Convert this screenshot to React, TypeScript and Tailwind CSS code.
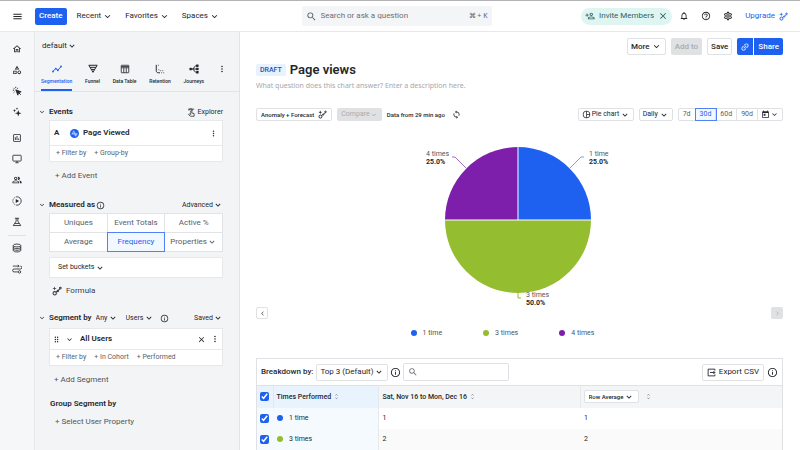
import { useState, type ReactNode } from 'react';
import clsx from 'clsx';
import {
  MdArrowBackIosNew,
  MdClose,
  MdDragIndicator,
  MdHelpOutline,
  MdInfoOutline,
  MdInsertLink,
  MdKeyboardArrowDown,
  MdMenu,
  MdMoreVert,
  MdNotificationsNone,
  MdOutlineCategory,
  MdOutlineHome,
  MdOutlineInsertChartOutlined,
  MdOutlinePeopleAlt,
  MdOutlinePersonAddAlt,
  MdOutlinePieChartOutline,
  MdOutlineSettings,
  MdSearch,
  MdSync,
  MdToday,
  MdUnfoldMore,
} from 'react-icons/md';

type IconProps = { size?: number; className?: string };

function Svg({ size = 10, className, children }: IconProps & { children: ReactNode }) {
  return (
    <svg
      width={size}
      height={size}
      viewBox="0 0 24 24"
      fill="none"
      stroke="currentColor"
      strokeWidth={2}
      className={clsx('shrink-0', className)}
      aria-hidden="true"
    >
      {children}
    </svg>
  );
}

function ClickIcon(props: IconProps) {
  return (
    <Svg {...props}>
      <path d="M9 9l13 5-6 2-2 6z" fill="currentColor" />
      <path d="M16 16l5 5M9 2v3M3.500 4.500l2 2M2 10h3M4 16l2-2M14.500 4.500l-1.500 2" strokeWidth={2.400} />
    </Svg>
  );
}

function SparklesIcon(props: IconProps) {
  return (
    <Svg {...props}>
      <g fill="currentColor" stroke="none">
        <path d="M15 7l2 6 6 2-6 2-2 6-2-6-6-2 6-2z" />
        <path d="M6 4l1 3.500L10.500 8.500 7 9.500 6 13 5 9.500 1.500 8.500 5 7.500z" />
        <path d="M12 1l.8 2.200L15 4l-2.200.8L12 7l-.8-2.200L9 4l2.200-.8z" />
      </g>
    </Svg>
  );
}

function MonitorIcon(props: IconProps) {
  return (
    <Svg {...props}>
      <rect x="2" y="3" width="20" height="14" rx="1.500" />
      <path d="M8 21h8M12 17v4" />
    </Svg>
  );
}

function PlayIcon(props: IconProps) {
  return (
    <Svg {...props}>
      <path d="M12 2a10 10 0 010 20" />
      <path d="M12 22a10 10 0 010-20" strokeDasharray="3 2.500" />
      <path d="M9 7v10l8-5z" fill="currentColor" stroke="none" />
    </Svg>
  );
}

function FlaskIcon(props: IconProps) {
  return (
    <Svg {...props}>
      <path d="M7 3h10M10 3v7L3 20.500h18L14 10V3M7 15.500h10" />
    </Svg>
  );
}

function DatabaseIcon(props: IconProps) {
  return (
    <Svg {...props}>
      <ellipse cx="12" cy="6" rx="9" ry="3.500" />
      <path d="M3 6v12c0 2 4 3.500 9 3.500s9-1.500 9-3.500V6M3 10c0 2 4 3.500 9 3.500s9-1.500 9-3.500M3 14c0 2 4 3.500 9 3.500s9-1.500 9-3.500" />
    </Svg>
  );
}

function RouteIcon(props: IconProps) {
  return (
    <Svg {...props}>
      <path d="M2 5h15M14 2l3 3-3 3M20 5a3.500 3.500 0 010 7H5a3.500 3.500 0 000 7h9" />
      <circle cx="18" cy="19" r="3" />
    </Svg>
  );
}

function LineIcon(props: IconProps) {
  return (
    <Svg {...props}>
      <path d="M2 18l7-7 5 4 8-9" strokeWidth={2.400} />
      <g fill="currentColor" stroke="none">
        <circle cx="2.500" cy="18" r="2.200" />
        <circle cx="9" cy="11" r="2.200" />
        <circle cx="14" cy="15" r="2.200" />
        <circle cx="21.500" cy="6" r="2.200" />
      </g>
    </Svg>
  );
}

function FunnelIcon(props: IconProps) {
  return (
    <Svg {...props}>
      <path d="M2 3h20L12 20zM5 8h14M8 13h8" strokeWidth={2.400} />
    </Svg>
  );
}

function TableIcon(props: IconProps) {
  return (
    <Svg {...props}>
      <rect x="3" y="3" width="18" height="18" rx="1" />
      <path d="M3 6h18M3 9h18M9 9v12M15 9v12" />
    </Svg>
  );
}

function RetentionIcon(props: IconProps) {
  return (
    <Svg {...props}>
      <path d="M3 2v14c0 3 2 5 5 5h4" strokeWidth={2.400} />
      <path d="M7 3h3M15 21h8M9 13c0 2 1 3 3 3h8" strokeDasharray="2 3" />
    </Svg>
  );
}

function JourneysIcon(props: IconProps) {
  return (
    <Svg {...props}>
      <path d="M4 12h16M9 12l7-8h4M9 12l7 8h4" strokeWidth={2.400} />
      <g fill="currentColor" stroke="none">
        <rect x="1" y="9" width="6" height="6" rx="2" />
        <rect x="17" y="1" width="6" height="6" rx="1" />
        <rect x="17" y="9" width="6" height="6" rx="1" />
        <rect x="17" y="17" width="6" height="6" rx="1" />
      </g>
    </Svg>
  );
}

function InsightIcon(props: IconProps) {
  return (
    <Svg {...props}>
      <circle cx="6.500" cy="17.500" r="4" strokeWidth={2.600} />
      <circle cx="14" cy="12" r="1.600" strokeWidth={2.600} />
      <circle cx="20" cy="5" r="2" strokeWidth={2.600} />
      <path d="M9.500 15l3-2M15.500 10.500l3-3.500" strokeWidth={2.600} />
      <path d="M6 1l1.300 3.700L11 6 7.300 7.300 6 11 4.700 7.300 1 6l3.700-1.300z" fill="currentColor" stroke="none" />
    </Svg>
  );
}

function TapIcon(props: IconProps) {
  return (
    <Svg {...props}>
      <path d="M3 3h16M5 7a5 5 0 0110 0M10 17V8a1.500 1.500 0 013 0v5l6 2v7H9l-5-5 2-1z" />
    </Svg>
  );
}

function ExportIcon(props: IconProps) {
  return (
    <Svg {...props}>
      <path d="M21 7V3H3v18h18v-4M8 12h13M17 8l4 4-4 4" strokeWidth={2.400} />
    </Svg>
  );
}

function EventBadge() {
  return (
    <svg width="9" height="9" viewBox="0 0 24 24" className="shrink-0" aria-hidden="true">
      <circle cx="12" cy="12" r="12" fill="#1e61f0" />
      <path d="M4 13h16M7 13c2-10 4-10 6 0s3 6 4 0" fill="none" stroke="#fff" strokeWidth="1.800" />
    </svg>
  );
}

function Picker({ label, value, className }: { label: string; value: string; className?: string }) {
  return (
    <label className={clsx('inline-flex items-center', className)}>
      <select aria-label={label} className="appearance-none bg-transparent outline-none">
        <option>{value}</option>
      </select>
      <MdKeyboardArrowDown size={10} className="shrink-0" />
    </label>
  );
}

const railTop = [
  { name: 'Home', Icon: MdOutlineHome },
  { name: 'Catalog', Icon: MdOutlineCategory },
  { name: 'Autocapture', Icon: ClickIcon },
  { name: 'Assistant', Icon: SparklesIcon },
];

const railMiddle = [
  { name: 'Analytics', Icon: MdOutlineInsertChartOutlined },
  { name: 'Web', Icon: MonitorIcon },
  { name: 'Cohorts', Icon: MdOutlinePeopleAlt },
  { name: 'Session replay', Icon: PlayIcon },
  { name: 'Experiments', Icon: FlaskIcon },
];

const railBottom = [
  { name: 'Data', Icon: DatabaseIcon },
  { name: 'Pipelines', Icon: RouteIcon },
];

const chartTabs = [
  { name: 'Segmentation', Icon: LineIcon },
  { name: 'Funnel', Icon: FunnelIcon },
  { name: 'Data Table', Icon: TableIcon },
  { name: 'Retention', Icon: RetentionIcon },
  { name: 'Journeys', Icon: JourneysIcon },
];

const measures = ['Uniques', 'Event Totals', 'Active %', 'Average', 'Frequency'];
const ranges = ['7d', '30d', '60d', '90d'];

const series = [
  { name: '1 time', dot: 'bg-[#1e61f0]' },
  { name: '3 times', dot: 'bg-[#94bd2f]' },
  { name: '4 times', dot: 'bg-[#7e1fab]' },
];

const rows = [
  { ...series[0], value: 1, average: 1 },
  { ...series[1], value: 2, average: 2 },
];

function TopBar() {
  return (
    <header className="flex h-8 shrink-0 items-center border-t border-b border-t-[#b4b4b6] border-b-[#e6e8ea] bg-white px-3 text-[8px]">
      <button type="button" aria-label="Menu" className="mr-3">
        <MdMenu size={11} />
      </button>
      <button type="button" className="h-[17px] rounded-xs bg-[#1e61f0] px-1 font-medium text-white">
        Create
      </button>
      <nav className="ml-2.5 flex items-center gap-3">
        {['Recent', 'Favorites', 'Spaces'].map((item) => (
          <button key={item} type="button" className="flex items-center gap-px">
            {item}
            <MdKeyboardArrowDown size={11} />
          </button>
        ))}
      </nav>

      <div className="flex flex-1 justify-center pr-2">
        <label className="flex h-5 w-[190px] items-center gap-1 rounded-xs bg-[#f3f5f6] px-1 text-[#5a5e66]">
          <MdSearch size={11} className="shrink-0" />
          <input
            type="text"
            aria-label="Search"
            placeholder="Search or ask a question"
            className="min-w-0 flex-1 bg-transparent outline-none placeholder:text-[#6b6f76]"
          />
          <kbd className="font-sans text-[7px]">⌘ + K</kbd>
        </label>
      </div>

      <div className="flex h-[17px] items-center gap-1 rounded-full bg-[#dff5f2] px-1 text-[#2f5f61]">
        <MdOutlinePersonAddAlt size={10} className="-scale-x-100" />
        <button type="button">Invite Members</button>
        <button type="button" aria-label="Dismiss">
          <MdClose size={10} />
        </button>
      </div>
      <div className="ml-[7px] flex items-center gap-3">
        <button type="button" aria-label="Notifications">
          <MdNotificationsNone size={10} />
        </button>
        <button type="button" aria-label="Help">
          <MdHelpOutline size={10} />
        </button>
        <button type="button" aria-label="Settings">
          <MdOutlineSettings size={10} />
        </button>
        <a href="#upgrade" className="flex items-center gap-1 text-[#1e61f0]">
          Upgrade
          <InsightIcon size={9} />
        </a>
      </div>
    </header>
  );
}

function RailGroup({ items }: { items: typeof railTop }) {
  return (
    <div className="flex flex-col items-center gap-[11px]">
      {items.map(({ name, Icon }) => (
        <a key={name} href="#nav" aria-label={name}>
          <Icon size={10} />
        </a>
      ))}
    </div>
  );
}

function QueryBuilder() {
  const [tab, setTab] = useState('Segmentation');
  const [measure, setMeasure] = useState('Frequency');

  return (
    <aside className="w-[205px] shrink-0 border-r border-[#e1e3e6] bg-[#f3f4f6] text-[7px]">
      <div className="flex h-7 items-center px-[7px] text-[8px]">
        <Picker label="Project" value="default" />
      </div>

      {/* Chart types */}
      <div className="flex h-8 items-stretch justify-between border-b border-[#e1e3e6] pr-3 pl-1.5">
        {chartTabs.map(({ name, Icon }) => (
          <button
            key={name}
            type="button"
            onClick={() => setTab(name)}
            className={clsx(
              'flex flex-col items-center gap-1 border-b-2 pt-1 text-[5px] font-medium',
              tab === name ? 'border-[#1e61f0] text-[#1e61f0]' : 'border-transparent',
            )}
          >
            <Icon size={10} />
            {name}
          </button>
        ))}
        <button type="button" aria-label="More chart types" className="flex pt-1">
          <MdMoreVert size={10} />
        </button>
      </div>

      <div className="pr-4 pl-[3px]">
        {/* Events */}
        <div className="mt-3 flex h-4 items-center">
          <MdKeyboardArrowDown size={8} className="mr-[3px]" />
          <h2 className="flex-1 text-[8px] font-semibold">Events</h2>
          <button type="button" className="flex items-center gap-0.5">
            <TapIcon size={9} />
            Explorer
          </button>
        </div>
        <div className="ml-[11px] border border-[#e6e8ea] bg-white">
          <div className="flex h-6 items-center px-1 text-[8px] font-semibold">
            <span className="w-4">A</span>
            <EventBadge />
            <span className="ml-1 flex-1">Page Viewed</span>
            <button type="button" aria-label="Event options">
              <MdMoreVert size={9} />
            </button>
          </div>
          <div className="flex h-4 items-center gap-2 border-t border-[#e6e8ea] px-1.5 text-[#5a5e66]">
            <button type="button">+ Filter by</button>
            <button type="button">+ Group-by</button>
          </div>
        </div>
        <button type="button" className="mt-2 ml-[17px] flex h-3 items-center text-[8px] text-[#50545b]">
          + Add Event
        </button>

        {/* Measured as */}
        <div className="mt-[15px] flex h-4 items-center">
          <MdKeyboardArrowDown size={8} className="mr-[3px]" />
          <h2 className="text-[8px] font-semibold">Measured as</h2>
          <MdInfoOutline size={9} className="ml-px" />
          <span className="flex-1" />
          <Picker label="Measure options" value="Advanced" />
        </div>
        <div className="ml-[11px] grid grid-cols-3 gap-px border border-[#e1e3e6] bg-[#e1e3e6] text-[8px] text-[#5a5e66]">
          {measures.map((name) => (
            <button
              key={name}
              type="button"
              onClick={() => setMeasure(name)}
              className={clsx(
                'h-[18px]',
                measure === name ? 'bg-[#f1f8ff] text-[#1e61f0] outline outline-[#4f83f5]' : 'bg-white',
              )}
            >
              {name}
            </button>
          ))}
          <Picker label="Properties" value="Properties" className="justify-center bg-white" />
        </div>
        <div className="mt-[5px] ml-[11px] flex h-[21px] items-center border border-[#e6e8ea] bg-white px-2">
          <button type="button" className="flex items-center gap-px">
            Set buckets
            <MdKeyboardArrowDown size={10} />
          </button>
        </div>
        <button type="button" className="mt-[7px] ml-[14px] flex h-3 items-center gap-1 text-[8px] text-[#3c4048]">
          <InsightIcon size={10} />
          Formula
        </button>

        {/* Segment by */}
        <div className="mt-[13px] flex h-4 items-center">
          <MdKeyboardArrowDown size={8} className="mr-[3px]" />
          <h2 className="text-[8px] font-semibold">Segment by</h2>
          <Picker label="Match" value="Any" className="ml-1" />
          <Picker label="Segment type" value="Users" className="ml-2" />
          <MdInfoOutline size={9} className="ml-1.5" />
          <span className="flex-1" />
          <Picker label="Saved segments" value="Saved" />
        </div>
        <div className="mt-0.5 ml-[11px] border border-[#e6e8ea] bg-white">
          <div className="flex h-5 items-center px-0.5 text-[8px] font-semibold">
            <MdDragIndicator size={9} />
            <MdKeyboardArrowDown size={9} className="ml-1" />
            <span className="ml-1.5 flex-1">All Users</span>
            <button type="button" aria-label="Remove segment" className="mr-1">
              <MdClose size={9} />
            </button>
            <button type="button" aria-label="Segment options">
              <MdMoreVert size={10} />
            </button>
          </div>
          <div className="flex h-4 items-center gap-2 border-t border-[#e6e8ea] px-1.5 text-[#5a5e66]">
            <button type="button">+ Filter by</button>
            <button type="button">+ In Cohort</button>
            <button type="button">+ Performed</button>
          </div>
        </div>
        <button type="button" className="mt-2 ml-4 flex h-3 items-center text-[8px] text-[#50545b]">
          + Add Segment
        </button>
        <h2 className="mt-3 ml-3 text-[8px] leading-3 font-semibold">Group Segment by</h2>
        <button type="button" className="mt-1.5 ml-[17px] flex h-3 items-center text-[8px] text-[#50545b]">
          + Select User Property
        </button>
      </div>
    </aside>
  );
}

function PieChart() {
  return (
    <svg width="201" height="176" viewBox="0 0 201 176" role="img" aria-label="Page views by frequency">
      <path d="M99 77V4a73 73 0 0173 73z" fill="#1e61f0" />
      <path d="M99 77h73a73 73 0 01-146 0z" fill="#94bd2f" />
      <path d="M99 77H26A73 73 0 0199 4z" fill="#7e1fab" />
      <path d="M26 77h146M99 4v73" stroke="#fff" strokeWidth="1" />
      <g fill="none" strokeWidth="1">
        <path d="M151 25l11-11h3" stroke="#7d9ff0" />
        <path d="M47 25L36 14h-3" stroke="#a671c4" />
        <path d="M99 150v5h3" stroke="#94bd2f" />
      </g>
      <g fill="#50545b" fontSize="7">
        <text x="170" y="13">1 time</text>
        <text x="7" y="13">4 times</text>
        <text x="107" y="154">3 times</text>
      </g>
      <g fill="#24272c" fontSize="7" fontWeight="700">
        <text x="170" y="21">25.0%</text>
        <text x="7" y="21">25.0%</text>
        <text x="107" y="162">50.0%</text>
      </g>
    </svg>
  );
}

const outlineButton = 'flex items-center rounded-xs border border-[#dfe1e4] bg-white';

function Breakdown() {
  return (
    <section className="border border-b-0 border-[#dfe1e4]">
      <div className="flex h-[26px] items-center px-1 text-[8px]">
        <span className="font-medium">Breakdown by:</span>
        <Picker label="Breakdown by" value="Top 3 (Default)" className={clsx(outlineButton, 'ml-[3px] h-[17px] px-[3px]')} />
        <MdInfoOutline size={11} className="ml-0.5" />
        <label className={clsx(outlineButton, 'ml-0.5 h-[18px] w-[106px] px-1')}>
          <MdSearch size={10} className="shrink-0 text-[#6b6f76]" />
          <input type="text" aria-label="Search rows" className="w-full min-w-0 outline-none" />
        </label>
        <span className="flex-1" />
        <button type="button" className={clsx(outlineButton, 'h-[17px] gap-[3px] px-1')}>
          <ExportIcon size={9} />
          Export CSV
        </button>
        <MdInfoOutline size={11} className="ml-[3px]" />
      </div>

      <table className="w-full table-fixed border-t border-[#dfe1e4] text-left text-[7px]">
        <colgroup>
          <col className="w-4" />
          <col className="w-1/5" />
          <col />
          <col />
        </colgroup>
        <thead>
          <tr className="h-[22px] bg-[#f3f5f6]">
            <th className="bg-[#e9f3fe] pl-[3px]">
              <input type="checkbox" aria-label="Select all" defaultChecked className="block size-[9px] accent-[#1e61f0]" />
            </th>
            <th className="border-x border-[#e1e8f0] bg-[#e9f3fe] pl-[3px] font-medium">
              <span className="flex items-center gap-0.5">
                Times Performed
                <MdUnfoldMore size={7} className="text-[#8a8e95]" />
              </span>
            </th>
            <th className="pl-1 font-medium">
              <span className="flex items-center gap-0.5">
                Sat, Nov 16 to Mon, Dec 16
                <MdUnfoldMore size={7} className="text-[#8a8e95]" />
              </span>
            </th>
            <th className="border-l border-[#e6e8ea] pl-[3px] font-medium">
              <span className="flex items-center gap-1.5">
                <Picker
                  label="Row metric"
                  value="Row Average"
                  className={clsx(outlineButton, 'h-[13px] px-1 text-[6px]')}
                />
                <MdUnfoldMore size={7} className="text-[#8a8e95]" />
              </span>
            </th>
          </tr>
        </thead>
        <tbody>
          {rows.map((row) => (
            <tr key={row.name} className="h-[21px] even:bg-[#fafafa]">
              <td className="bg-[#f5faff] pl-[3px]">
                <input type="checkbox" aria-label={row.name} defaultChecked className="block size-[9px] accent-[#1e61f0]" />
              </td>
              <td className="border-r border-[#e6e8ea] bg-[#f5faff] pl-1">
                <span className="flex items-center gap-1.5">
                  <span className={clsx('size-1.5 rounded-full', row.dot)} />
                  {row.name}
                </span>
              </td>
              <td className="pl-1">{row.value}</td>
              <td className="pl-1">{row.average}</td>
            </tr>
          ))}
        </tbody>
      </table>
    </section>
  );
}

function ChartPanel() {
  const [range, setRange] = useState('30d');

  return (
    <main className="min-w-0 flex-1 bg-white pt-1.5 pr-[17px] pl-4">
      <div className="flex h-[17px] justify-end gap-[5px] text-[8px] font-medium">
        <button type="button" className={clsx(outlineButton, 'gap-px px-[3px]')}>
          More
          <MdKeyboardArrowDown size={11} />
        </button>
        <button type="button" disabled className="rounded-xs bg-[#dfe1e3] px-1 text-[#a9acb0]">
          Add to
        </button>
        <button type="button" className={clsx(outlineButton, 'px-[3px]')}>
          Save
        </button>
        <div className="flex gap-px">
          <button type="button" aria-label="Copy link" className="rounded-l-xs bg-[#1e61f0] px-[3px] text-white">
            <MdInsertLink size={10} className="-rotate-45" />
          </button>
          <button type="button" className="rounded-r-xs bg-[#1e61f0] px-1 text-white">
            Share
          </button>
        </div>
      </div>

      <div className="mt-[7px] flex h-4 items-center gap-1">
        <span className="rounded-xs bg-[#e6f2fd] px-1 text-[7px] leading-3 font-medium text-[#2a4fb0]">DRAFT</span>
        <h1 className="text-[13px] font-semibold">Page views</h1>
      </div>
      <p className="mt-0.5 font-['Noto_Sans','Roboto',sans-serif] text-[7px] leading-3 text-[#a4a7ac]">
        What question does this chart answer? Enter a description here.
      </p>

      {/* Chart toolbar */}
      <div className="mt-4 flex h-[13px] items-stretch gap-[5px] text-[7px]">
        <button type="button" className={clsx(outlineButton, 'gap-1 px-1 text-[6px] font-medium')}>
          Anomaly + Forecast
          <InsightIcon size={9} />
        </button>
        <button
          type="button"
          disabled
          className="flex items-center rounded-xs bg-[#dfe1e3] px-1 text-[#a9acb0]"
        >
          Compare
          <MdKeyboardArrowDown size={8} />
        </button>
        <span className="flex items-center text-[6px] font-medium">Data from 29 min ago</span>
        <button type="button" aria-label="Refresh" className="ml-0.5">
          <MdSync size={9} />
        </button>
        <span className="flex-1" />
        <div className={clsx(outlineButton, 'px-[3px]')}>
          <MdOutlinePieChartOutline size={9} className="mr-px" />
          <Picker label="Chart type" value="Pie chart" />
        </div>
        <Picker label="Interval" value="Daily" className={clsx(outlineButton, 'px-[3px]')} />
        <div className="flex items-stretch divide-x divide-[#dfe1e4] rounded-xs border border-[#dfe1e4] text-[#5a5e66]">
          {ranges.map((item) => (
            <button
              key={item}
              type="button"
              onClick={() => setRange(item)}
              className={clsx('px-1', range === item && 'bg-[#f1f8ff] text-[#1e61f0] outline outline-[#4f83f5]')}
            >
              {item}
            </button>
          ))}
          <button type="button" aria-label="Custom range" className="flex items-center px-[3px] text-[#24272c]">
            <MdToday size={9} />
            <MdKeyboardArrowDown size={9} />
          </button>
        </div>
      </div>

      <div className="mt-[22px] flex items-end justify-between">
        <button type="button" aria-label="Previous" className={clsx(outlineButton, 'size-3 justify-center')}>
          <MdArrowBackIosNew size={5} />
        </button>
        <PieChart />
        <button
          type="button"
          aria-label="Next"
          disabled
          className="flex size-3 items-center justify-center rounded-xs bg-[#dfe1e3] text-[#a9acb0]"
        >
          <MdArrowBackIosNew size={5} className="rotate-180" />
        </button>
      </div>
      <ul className="mt-2 mb-[19px] flex justify-center gap-[41px] pr-[34px] text-[7px] leading-3 text-[#50545b]">
        {series.map((item) => (
          <li key={item.name} className="flex items-center gap-1.5">
            <span className={clsx('size-1.5 rounded-full', item.dot)} />
            {item.name}
          </li>
        ))}
      </ul>

      <Breakdown />
    </main>
  );
}

export default function App() {
  return (
    <div className="flex min-h-screen flex-col font-['Roboto','Liberation_Sans',sans-serif] text-[#24272c]">
      <TopBar />
      <div className="flex flex-1">
        <nav className="flex w-[35px] shrink-0 flex-col border-r border-[#e6e8ea] bg-[#f6f7f8] pt-3">
          <RailGroup items={railTop} />
          <div className="mt-4">
            <RailGroup items={railMiddle} />
          </div>
          <hr className="mx-2 mt-2 mb-[7px] border-[#dfe1e4]" />
          <RailGroup items={railBottom} />
        </nav>
        <QueryBuilder />
        <ChartPanel />
      </div>
    </div>
  );
}
